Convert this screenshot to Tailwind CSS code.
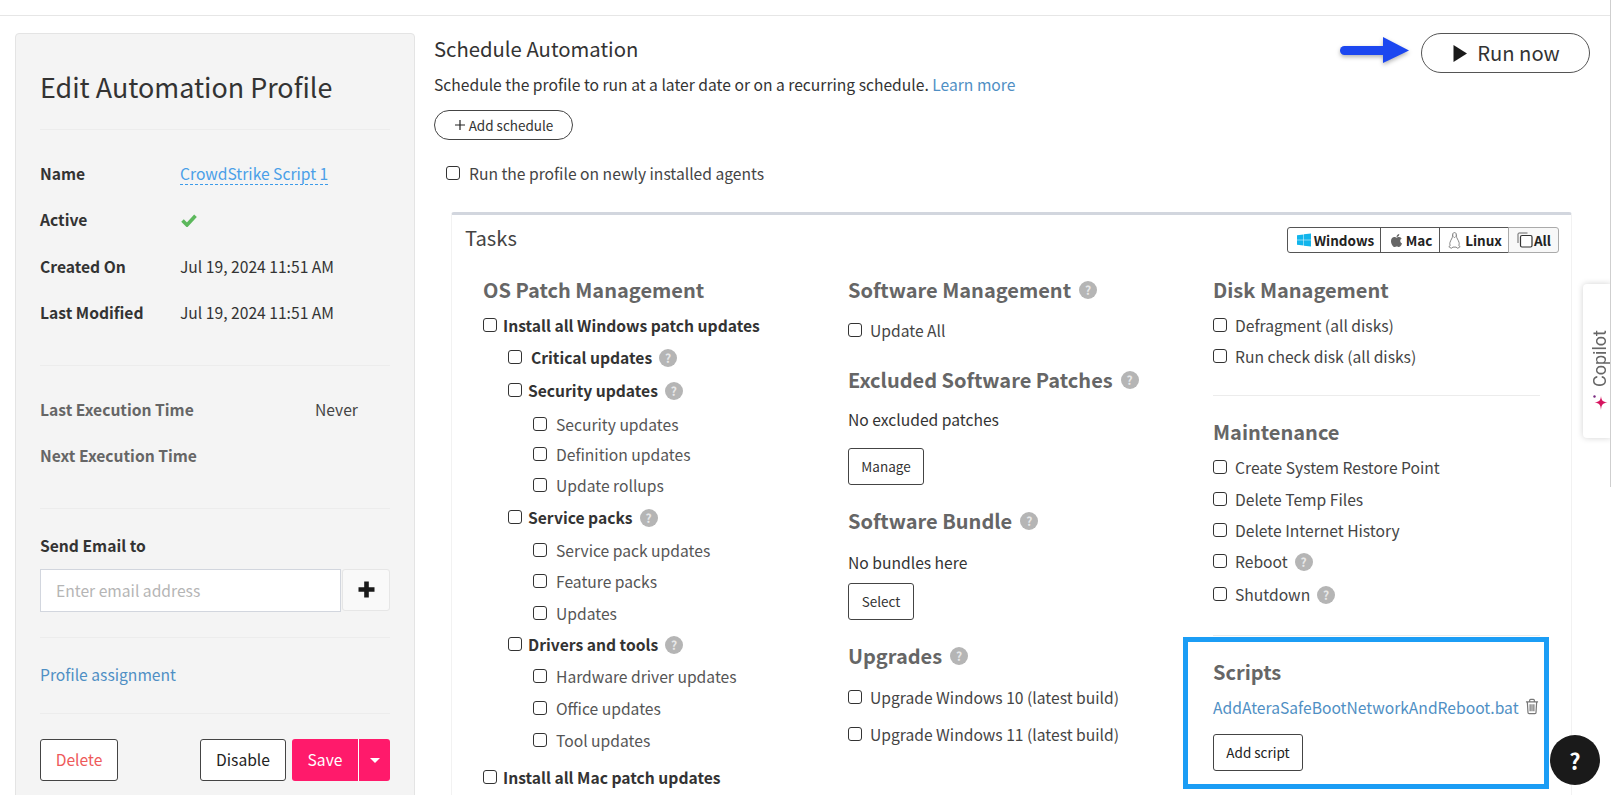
<!DOCTYPE html>
<html lang="en">
<head>
    <meta charset="UTF-8">
    <meta name="viewport" content="width=device-width, initial-scale=1.0">
    <title>Edit Automation Profile</title>
    <script src="https://cdn.jsdelivr.net/npm/@tailwindcss/browser@4"></script>
</head>
<body class="relative h-[795px] overflow-hidden bg-white font-['Noto_Sans_CJK_SC','Liberation_Sans',sans-serif] text-[15.65px] text-[#333]">
    <!-- Top bar -->
    <div class="h-[16px] border-b border-[#e6e6e6]"></div>

    <div class="flex items-start pl-[15px]">
        <!-- Left panel -->
        <aside class="mt-[17px] h-[800px] w-[400px] shrink-0 rounded-t-[4px] border border-[#e4e4e4] bg-[#f4f4f4] px-[24px] pt-[34px]">
            <h1 class="flex h-[38px] items-center text-[26.9px] text-[#333]">Edit Automation Profile</h1>
            <div class="mt-[23px] h-px bg-[#ececec]"></div>

            <div class="mt-[29px] flex h-[30px] items-center"><span class="w-[140px] font-bold">Name</span><a class="border-b border-dashed border-[#3d9be9] leading-[20px] text-[#4a9fe8]">CrowdStrike Script 1</a></div>
            <div class="mt-[16px] flex h-[30px] items-center"><span class="w-[140px] font-bold">Active</span>
                <svg class="ml-[1px] h-[14px] w-[16px]" viewBox="0 0 16 14"><path d="M1.5 7.5 L6 12 L14.5 2.8" fill="none" stroke="#5cb85c" stroke-width="3.6"/></svg>
            </div>
            <div class="mt-[17px] flex h-[30px] items-center"><span class="w-[140px] font-bold">Created On</span><span>Jul 19, 2024 11:51 AM</span></div>
            <div class="mt-[16px] flex h-[30px] items-center"><span class="w-[140px] font-bold">Last Modified</span><span>Jul 19, 2024 11:51 AM</span></div>
            <div class="mt-[37px] h-px bg-[#ececec]"></div>

            <div class="mt-[29px] flex h-[30px] items-center text-[#666]"><span class="w-[275px] font-bold">Last Execution Time</span><span class="text-[#444]">Never</span></div>
            <div class="mt-[16px] flex h-[30px] items-center font-bold text-[#666]">Next Execution Time</div>
            <div class="mt-[37px] h-px bg-[#ececec]"></div>

            <div class="mt-[22px] flex h-[30px] items-center font-bold">Send Email to</div>
            <div class="mt-[8px] flex h-[43px] items-start">
                <input type="text" placeholder="Enter email address" class="h-[43px] w-[301px] border border-[#d2d6de] bg-white px-[15px] text-[15.65px] placeholder:text-[#b5b5b5]">
                <button class="ml-px flex h-[42px] w-[48px] items-center justify-center rounded-[3px] border border-[#e6e6e6] bg-[#f9f9f9]">
                    <svg class="mb-[2px] h-[17px] w-[17px]" viewBox="0 0 17 17"><path d="M8.5 0.5 V16.5 M0.5 8.5 H16.5" stroke="#1a1a1a" stroke-width="4.6"/></svg>
                </button>
            </div>
            <div class="mt-[25px] h-px bg-[#ececec]"></div>

            <div class="mt-[22px] flex h-[30px] items-center text-[#4f8fc4]">Profile assignment</div>
            <div class="mt-[23px] h-px bg-[#ececec]"></div>

            <div class="mt-[25px] flex h-[42px]">
                <button class="h-[42px] w-[78px] rounded-[3px] border border-[#444] bg-white text-[#ee5a5a]">Delete</button>
                <button class="ml-[82px] h-[42px] w-[86px] rounded-[3px] border border-[#444] bg-white text-[#222]">Disable</button>
                <button class="ml-[6px] h-[42px] w-[67px] rounded-l-[3px] border-r border-white bg-[#ff1a6b] text-white">Save</button>
                <button class="flex h-[42px] w-[31px] items-center justify-center rounded-r-[3px] bg-[#ff1a6b]">
                    <svg class="h-[5px] w-[10px]" viewBox="0 0 10 5"><path d="M0 0 H10 L5 5 Z" fill="#fff"/></svg>
                </button>
            </div>
        </aside>

        <!-- Main -->
        <main class="ml-[19px] min-w-0 flex-1 pr-[21px]">
            <div class="flex items-start justify-between">
                <div>
                    <h2 class="mt-[17px] flex h-[30px] items-center text-[20.3px] text-[#333]">Schedule Automation</h2>
                    <p class="mt-[7px] flex h-[30px] items-center text-[#333]">Schedule the profile to run at a later date or on a recurring schedule.&nbsp;<a class="text-[#4f8fc4]">Learn more</a></p>
                    <button class="mt-[10px] flex h-[30px] w-[139px] items-center justify-center rounded-full border border-[#444] text-[13.5px] text-[#333]">
                        <svg class="mr-[3px] h-[12px] w-[12px]" viewBox="0 0 12 12"><path d="M6 1 V11 M1 6 H11" stroke="#222" stroke-width="1.2"/></svg>Add schedule
                    </button>
                    <label class="mt-[19px] ml-[12px] flex h-[30px] items-center text-[#444]">
                        <input type="checkbox" class="mb-[2px] h-[14px] w-[14px] appearance-none rounded-[3px] border-[1.5px] border-[#333] bg-white"><span class="ml-[9px]">Run the profile on newly installed agents</span>
                    </label>
                </div>
                <button class="mt-[17px] flex h-[40px] w-[169px] items-center justify-center rounded-full border border-[#555] pl-[2px] text-[20.2px] text-[#333]">
                    <svg class="mr-[10px] h-[17px] w-[14px]" viewBox="0 0 14 17"><path d="M0.5 0 L14 8.5 L0.5 17 Z" fill="#1a1a1a"/></svg>Run now
                </button>
            </div>

            <!-- Tasks -->
            <section class="mt-[23px] mr-[18px] ml-[17px] h-[600px] rounded-t-[3px] border-x border-t-[3px] border-x-[#f2f2f2] border-t-[#d2d6de] bg-white">
                <div class="flex items-start justify-between pt-[8px] pr-[12px] pl-[13px]">
                    <h3 class="flex h-[30px] items-center text-[20.2px] text-[#444]">Tasks</h3>
                    <div class="mt-[4px] flex h-[26px] text-[13.5px] font-bold text-[#222]">
                        <span class="flex w-[94px] items-center justify-center gap-[3px] rounded-l-[3px] border border-[#555] pl-[3px]">
                            <svg class="h-[14px] w-[14px]" viewBox="0 0 15 14"><path d="M0 2 L6.9 1 V6.7 H0 Z M7.4 0.9 L15 0 V6.7 H7.4 Z M0 7.3 H6.9 V13 L0 12 Z M7.4 7.3 H15 V14 L7.4 13.1 Z" fill="#12b5ec"/></svg>Windows
                        </span>
                        <span class="-ml-px flex w-[60px] items-center justify-center gap-[3px] border border-[#555] pl-[2px]">
                            <svg class="h-[15px] w-[13px]" viewBox="0 0 384 512"><path fill="#666" d="M318.7 268.7c-.2-36.7 16.4-64.4 50-84.8-18.8-26.9-47.2-41.7-84.7-44.6-35.5-2.8-74.3 20.7-88.5 20.7-15 0-49.4-19.7-76.4-19.7C63.3 141.2 4 184.8 4 273.5q0 39.3 14.4 81.2c12.8 36.7 59 126.7 107.2 125.2 25.2-.6 43-17.9 75.8-17.9 31.8 0 48.3 17.9 76.4 17.9 48.6-.7 90.4-82.5 102.6-119.3-65.2-30.7-61.7-90-61.7-91.9zm-56.6-164.2c27.3-32.4 24.8-61.9 24-72.5-24.1 1.4-52 16.4-67.9 34.9-17.5 19.8-27.8 44.3-25.6 71.9 26.1 2 49.9-11.4 69.5-34.3z"/></svg>Mac
                        </span>
                        <span class="-ml-px flex w-[70px] items-center justify-center gap-[4px] border border-[#555] pl-[2px]">
                            <svg class="h-[17px] w-[13px]" viewBox="0 0 13 17"><path d="M6.5 0.6 C4.7 0.6 4.4 2.4 4.5 4.2 C4.6 6 2.6 8 2 10.4 C1.6 11.9 1.8 12.8 2.4 13.3 L0.8 14.6 L3.2 16.3 L5 15.1 H8 L9.8 16.3 L12.2 14.6 L10.6 13.3 C11.2 12.8 11.4 11.9 11 10.4 C10.4 8 8.4 6 8.5 4.2 C8.6 2.4 8.3 0.6 6.5 0.6 Z" fill="#fff" stroke="#666" stroke-width="0.8"/><path d="M5.4 3 H5.9 M7.1 3 H7.6 M5.3 4.6 L6.5 5.5 L7.7 4.6" fill="none" stroke="#555" stroke-width="0.7"/></svg>Linux
                        </span>
                        <span class="-ml-px flex w-[51px] items-center justify-center gap-[1px] rounded-r-[3px] border border-[#aaa] bg-[#f8f8f8] pl-[1px]">
                            <svg class="h-[16px] w-[16px]" viewBox="0 0 16 16"><path d="M10.5 1 H2 C1.4 1 1 1.4 1 2 V11" fill="none" stroke="#666" stroke-width="1"/><rect x="3.5" y="3.5" width="11.5" height="11.5" rx="1.5" fill="#fff" stroke="#333" stroke-width="1.2"/></svg>All
                        </span>
                    </div>
                </div>

                <div class="mt-[22px] flex pl-[31px]">
                    <!-- OS patches -->
                    <div class="w-[365px] shrink-0">
                        <h4 class="flex h-[30px] items-center text-[20px] font-bold text-[#666]">OS Patch Management</h4>
                        <label class="mt-[6px] flex h-[30px] items-center font-bold"><input type="checkbox" class="mb-[2px] h-[14px] w-[14px] appearance-none rounded-[3px] border-[1.5px] border-[#333] bg-white"><span class="ml-[6px]">Install all Windows patch updates</span></label>
                        <label class="mt-[2px] ml-[25px] flex h-[30px] items-center font-bold"><input type="checkbox" class="mb-[2px] h-[14px] w-[14px] appearance-none rounded-[3px] border-[1.5px] border-[#333] bg-white"><span class="ml-[9px]">Critical updates</span><span class="ml-[7px] flex h-[18px] w-[18px] items-center justify-center rounded-full bg-[#b5b5b5] text-[12px] font-bold text-[#e8e8e8]">?</span></label>
                        <label class="mt-[3px] ml-[25px] flex h-[30px] items-center font-bold"><input type="checkbox" class="mb-[2px] h-[14px] w-[14px] appearance-none rounded-[3px] border-[1.5px] border-[#333] bg-white"><span class="ml-[6px]">Security updates</span><span class="ml-[7px] flex h-[18px] w-[18px] items-center justify-center rounded-full bg-[#b5b5b5] text-[12px] font-bold text-[#e8e8e8]">?</span></label>
                        <label class="mt-[4px] ml-[50px] flex h-[30px] items-center text-[#555]"><input type="checkbox" class="mb-[2px] h-[14px] w-[14px] appearance-none rounded-[3px] border-[1.5px] border-[#333] bg-white"><span class="ml-[9px]">Security updates</span></label>
                        <label class="mt-[0px] ml-[50px] flex h-[30px] items-center text-[#555]"><input type="checkbox" class="mb-[2px] h-[14px] w-[14px] appearance-none rounded-[3px] border-[1.5px] border-[#333] bg-white"><span class="ml-[9px]">Definition updates</span></label>
                        <label class="mt-[1px] ml-[50px] flex h-[30px] items-center text-[#555]"><input type="checkbox" class="mb-[2px] h-[14px] w-[14px] appearance-none rounded-[3px] border-[1.5px] border-[#333] bg-white"><span class="ml-[9px]">Update rollups</span></label>
                        <label class="mt-[2px] ml-[25px] flex h-[30px] items-center font-bold"><input type="checkbox" class="mb-[2px] h-[14px] w-[14px] appearance-none rounded-[3px] border-[1.5px] border-[#333] bg-white"><span class="ml-[6px]">Service packs</span><span class="ml-[7px] flex h-[18px] w-[18px] items-center justify-center rounded-full bg-[#b5b5b5] text-[12px] font-bold text-[#e8e8e8]">?</span></label>
                        <label class="mt-[3px] ml-[50px] flex h-[30px] items-center text-[#555]"><input type="checkbox" class="mb-[2px] h-[14px] w-[14px] appearance-none rounded-[3px] border-[1.5px] border-[#333] bg-white"><span class="ml-[9px]">Service pack updates</span></label>
                        <label class="mt-[1px] ml-[50px] flex h-[30px] items-center text-[#555]"><input type="checkbox" class="mb-[2px] h-[14px] w-[14px] appearance-none rounded-[3px] border-[1.5px] border-[#333] bg-white"><span class="ml-[9px]">Feature packs</span></label>
                        <label class="mt-[2px] ml-[50px] flex h-[30px] items-center text-[#555]"><input type="checkbox" class="mb-[2px] h-[14px] w-[14px] appearance-none rounded-[3px] border-[1.5px] border-[#333] bg-white"><span class="ml-[9px]">Updates</span></label>
                        <label class="mt-[1px] ml-[25px] flex h-[30px] items-center font-bold"><input type="checkbox" class="mb-[2px] h-[14px] w-[14px] appearance-none rounded-[3px] border-[1.5px] border-[#333] bg-white"><span class="ml-[6px]">Drivers and tools</span><span class="ml-[7px] flex h-[18px] w-[18px] items-center justify-center rounded-full bg-[#b5b5b5] text-[12px] font-bold text-[#e8e8e8]">?</span></label>
                        <label class="mt-[2px] ml-[50px] flex h-[30px] items-center text-[#555]"><input type="checkbox" class="mb-[2px] h-[14px] w-[14px] appearance-none rounded-[3px] border-[1.5px] border-[#333] bg-white"><span class="ml-[9px]">Hardware driver updates</span></label>
                        <label class="mt-[2px] ml-[50px] flex h-[30px] items-center text-[#555]"><input type="checkbox" class="mb-[2px] h-[14px] w-[14px] appearance-none rounded-[3px] border-[1.5px] border-[#333] bg-white"><span class="ml-[9px]">Office updates</span></label>
                        <label class="mt-[2px] ml-[50px] flex h-[30px] items-center text-[#555]"><input type="checkbox" class="mb-[2px] h-[14px] w-[14px] appearance-none rounded-[3px] border-[1.5px] border-[#333] bg-white"><span class="ml-[9px]">Tool updates</span></label>
                        <label class="mt-[7px] flex h-[30px] items-center font-bold"><input type="checkbox" class="mb-[2px] h-[14px] w-[14px] appearance-none rounded-[3px] border-[1.5px] border-[#333] bg-white"><span class="ml-[6px]">Install all Mac patch updates</span></label>
                    </div>

                    <!-- Software -->
                    <div class="w-[365px] shrink-0">
                        <h4 class="flex h-[30px] items-center text-[20px] font-bold text-[#666]">Software Management<span class="ml-[8px] flex h-[18px] w-[18px] items-center justify-center rounded-full bg-[#b5b5b5] text-[12px] font-bold text-[#e8e8e8]">?</span></h4>
                        <label class="mt-[11px] flex h-[30px] items-center text-[#444]"><input type="checkbox" class="mb-[2px] h-[14px] w-[14px] appearance-none rounded-[3px] border-[1.5px] border-[#333] bg-white"><span class="ml-[8px]">Update All</span></label>
                        <h4 class="mt-[19px] flex h-[30px] items-center text-[20px] font-bold text-[#666]">Excluded Software Patches<span class="ml-[8px] flex h-[18px] w-[18px] items-center justify-center rounded-full bg-[#b5b5b5] text-[12px] font-bold text-[#e8e8e8]">?</span></h4>
                        <p class="mt-[10px] flex h-[30px] items-center text-[#333]">No excluded patches</p>
                        <button class="mt-[13px] block h-[37px] w-[76px] rounded-[3px] border border-[#444] text-[13.5px] text-[#333]">Manage</button>
                        <h4 class="mt-[21px] flex h-[30px] items-center text-[20px] font-bold text-[#666]">Software Bundle<span class="ml-[8px] flex h-[18px] w-[18px] items-center justify-center rounded-full bg-[#b5b5b5] text-[12px] font-bold text-[#e8e8e8]">?</span></h4>
                        <p class="mt-[12px] flex h-[30px] items-center text-[#333]">No bundles here</p>
                        <button class="mt-[5px] block h-[37px] w-[66px] rounded-[3px] border border-[#444] text-[13.5px] text-[#333]">Select</button>
                        <h4 class="mt-[21px] flex h-[30px] items-center text-[20px] font-bold text-[#666]">Upgrades<span class="ml-[8px] flex h-[18px] w-[18px] items-center justify-center rounded-full bg-[#b5b5b5] text-[12px] font-bold text-[#e8e8e8]">?</span></h4>
                        <label class="mt-[12px] flex h-[30px] items-center text-[#444]"><input type="checkbox" class="mb-[2px] h-[14px] w-[14px] appearance-none rounded-[3px] border-[1.5px] border-[#333] bg-white"><span class="ml-[8px]">Upgrade Windows 10 (latest build)</span></label>
                        <label class="mt-[7px] flex h-[30px] items-center text-[#444]"><input type="checkbox" class="mb-[2px] h-[14px] w-[14px] appearance-none rounded-[3px] border-[1.5px] border-[#333] bg-white"><span class="ml-[8px]">Upgrade Windows 11 (latest build)</span></label>
                    </div>

                    <!-- Disk / maintenance / scripts -->
                    <div class="w-[327px] shrink-0">
                        <h4 class="flex h-[30px] items-center text-[20px] font-bold text-[#666]">Disk Management</h4>
                        <label class="mt-[6px] flex h-[30px] items-center text-[#444]"><input type="checkbox" class="mb-[2px] h-[14px] w-[14px] appearance-none rounded-[3px] border-[1.5px] border-[#333] bg-white"><span class="ml-[8px]">Defragment (all disks)</span></label>
                        <label class="mt-[1px] flex h-[30px] items-center text-[#444]"><input type="checkbox" class="mb-[2px] h-[14px] w-[14px] appearance-none rounded-[3px] border-[1.5px] border-[#333] bg-white"><span class="ml-[8px]">Run check disk (all disks)</span></label>
                        <div class="mt-[23px] h-px bg-[#ececec]"></div>
                        <h4 class="mt-[21px] flex h-[30px] items-center text-[20px] font-bold text-[#666]">Maintenance</h4>
                        <label class="mt-[6px] flex h-[30px] items-center text-[#444]"><input type="checkbox" class="mb-[2px] h-[14px] w-[14px] appearance-none rounded-[3px] border-[1.5px] border-[#333] bg-white"><span class="ml-[8px]">Create System Restore Point</span></label>
                        <label class="mt-[2px] flex h-[30px] items-center text-[#444]"><input type="checkbox" class="mb-[2px] h-[14px] w-[14px] appearance-none rounded-[3px] border-[1.5px] border-[#333] bg-white"><span class="ml-[8px]">Delete Temp Files</span></label>
                        <label class="mt-[1px] flex h-[30px] items-center text-[#444]"><input type="checkbox" class="mb-[2px] h-[14px] w-[14px] appearance-none rounded-[3px] border-[1.5px] border-[#333] bg-white"><span class="ml-[8px]">Delete Internet History</span></label>
                        <label class="mt-[1px] flex h-[30px] items-center text-[#444]"><input type="checkbox" class="mb-[2px] h-[14px] w-[14px] appearance-none rounded-[3px] border-[1.5px] border-[#333] bg-white"><span class="ml-[8px]">Reboot</span><span class="ml-[7px] flex h-[18px] w-[18px] items-center justify-center rounded-full bg-[#b5b5b5] text-[12px] font-bold text-[#e8e8e8]">?</span></label>
                        <label class="mt-[3px] flex h-[30px] items-center text-[#444]"><input type="checkbox" class="mb-[2px] h-[14px] w-[14px] appearance-none rounded-[3px] border-[1.5px] border-[#333] bg-white"><span class="ml-[8px]">Shutdown</span><span class="ml-[7px] flex h-[18px] w-[18px] items-center justify-center rounded-full bg-[#b5b5b5] text-[12px] font-bold text-[#e8e8e8]">?</span></label>
                        <div class="mt-[25px] h-px bg-[#ececec]"></div>

                        <!-- highlighted scripts box -->
                        <div class="mt-[1px] -ml-[30px] h-[152px] w-[366px] border-[5px] border-[#1b9df5] pt-[15px] pl-[25px]">
                            <h4 class="flex h-[30px] items-center text-[20px] font-bold text-[#666]">Scripts</h4>
                            <div class="mt-[6px] flex h-[30px] items-center text-[#4f8fc4]">AddAteraSafeBootNetworkAndReboot.bat
                                <svg class="ml-[6px] mb-[4px] h-[17px] w-[14px]" viewBox="0 0 15 17" fill="none" stroke="#777" stroke-width="1.3"><path d="M1 3.5 H14 M5 3.5 V1.8 C5 1.2 5.4 0.8 6 0.8 H9 C9.6 0.8 10 1.2 10 1.8 V3.5 M2.5 3.5 L3.2 15 C3.2 15.7 3.7 16.2 4.4 16.2 H10.6 C11.3 16.2 11.8 15.7 11.8 15 L12.5 3.5 M5.5 6 V13.5 M7.5 6 V13.5 M9.5 6 V13.5"/></svg>
                            </div>
                            <button class="mt-[11px] block h-[37px] w-[90px] rounded-[3px] border border-[#444] text-[13.5px] text-[#222]">Add script</button>
                        </div>
                    </div>
                </div>
            </section>
        </main>
    </div>

    <!-- Annotation arrow -->
    <svg class="absolute top-[34px] left-[1336px] h-[34px] w-[76px] drop-shadow-[0_2px_2px_rgba(0,0,0,0.3)]" viewBox="0 0 76 34">
        <path d="M8.5 16.5 H48" stroke="#1c47f0" stroke-width="9" stroke-linecap="round"/>
        <path d="M47 3 L73 16.5 L47 29 Z" fill="#1c47f0"/>
    </svg>

    <!-- Copilot tab -->
    <div class="absolute top-[284px] right-0 flex h-[154px] w-[28px] flex-col items-center justify-center rounded-l-[4px] bg-white pt-[18px] pl-[6px] shadow-[0_0_6px_rgba(0,0,0,0.18)]">
        <span class="mb-[8px] font-['Roboto',sans-serif] text-[18px] leading-[20px] text-[#666] [writing-mode:vertical-rl] rotate-180">Copilot</span>
        <svg class="h-[15px] w-[16px]" viewBox="0 0 16 15"><path d="M9 1 C9.5 5.5 10.5 6.8 15.5 7.5 C10.5 8.2 9.5 9.5 9 15 C8.5 9.5 7.5 8.2 2.5 7.5 C7.5 6.8 8.5 5.5 9 1 Z" fill="#d6145f"/><circle cx="2.5" cy="1.5" r="1.2" fill="#7a2a80"/></svg>
    </div>

    <!-- Help bubble -->
    <div class="absolute top-[735px] left-[1550px] flex h-[50px] w-[50px] items-center justify-center rounded-full bg-[#1a1a1a] text-[22px] font-bold text-white">?</div>

    <!-- Scrollbar sliver -->
    <div class="absolute top-0 right-0 h-[487px] w-px bg-[#cfcfcf]"></div>
</body>
</html>
